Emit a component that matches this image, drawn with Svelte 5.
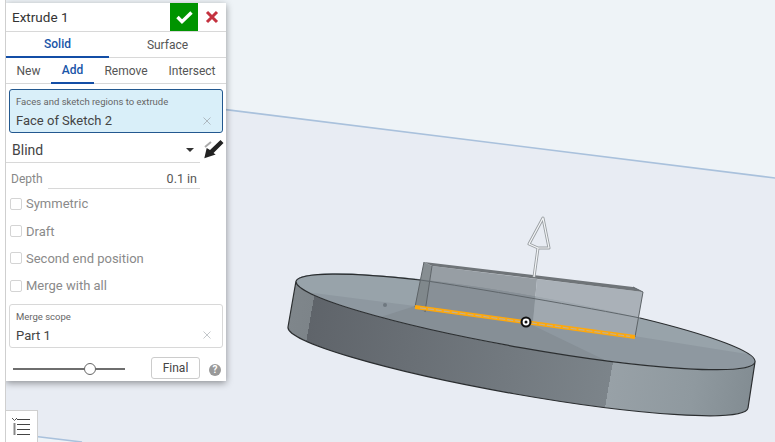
<script lang="ts">
	const modes = ['New', 'Add', 'Remove', 'Intersect'];
	const options = ['Symmetric', 'Draft', 'Second end position', 'Merge with all'];
</script>

<div class="app">
	<div class="rail"></div>
	<div class="viewport">
		<svg class="scene" viewBox="0 0 770 442" width="770" height="442">
			<defs>
				<linearGradient id="side" gradientUnits="userSpaceOnUse" x1="296" y1="281" x2="755" y2="361">
					<stop offset="0" stop-color="#7f868b" />
					<stop offset="0.044" stop-color="#7d8489" />
					<stop offset="0.044" stop-color="#5f646a" />
					<stop offset="0.7" stop-color="#7c848a" />
					<stop offset="0.7" stop-color="#98a1a7" />
					<stop offset="0.88" stop-color="#8f999f" />
					<stop offset="1" stop-color="#838d93" />
				</linearGradient>
				<clipPath id="disk-top">
					<ellipse cx="525.5" cy="321.5" rx="233" ry="26.5" transform="rotate(10 525.5 321.5)" />
				</clipPath>
			</defs>
			<g transform="translate(-5 0)">
				<rect x="0" y="0" width="780" height="442" fill="#eef3f7" />
				<path d="M0 80.5 L780 178.6 L780 442 L80 442 L0 431 Z" fill="#e8ecf3" />
				<path d="M100 94 L780 178.6" stroke="#a9c1dc" stroke-width="1.6" fill="none" />
				<path d="M30 435.8 L82 442" stroke="#a9c1dc" stroke-width="1.6" fill="none" />

				<!-- disk side -->
				<path d="M296 281 A233 26.5 10 0 0 755 362 L748 408 A233 26.5 10 0 1 288 327 Z" fill="url(#side)" />

				<!-- disk top -->
				<g clip-path="url(#disk-top)">
					<rect x="280" y="260" width="490" height="120" fill="#8e98a0" />
					<path d="M290 290 L415 306 L640 337 L760 356 L760 260 L290 260 Z" fill="#98a3aa" />
					<path d="M415 306 L526 322 L613 364 L340 330 Z" fill="#868f96" />
				</g>
				<circle cx="385" cy="305" r="2" fill="#6e787f" />

				<!-- block -->
				<path d="M424 262 L432 266 L425 312 L415 307 Z" fill="#7e858a" opacity="0.92" />
				<path d="M432 266 L537 279 L533 322 L425 312 Z" fill="#858c92" opacity="0.82" />
				<path d="M537 279 L643 292 L635 337 L533 322 Z" fill="#a0a9af" opacity="0.88" />
				<path d="M424 262 L633 287 L643 292 L432 266 Z" fill="#6f7478" />
				<path d="M424 262 L415 307 M432 266 L425 312" stroke="#5d6367" stroke-width="1" fill="none" />
				<path d="M633 287 L643 292 L635 337" stroke="#5d6367" stroke-width="1" fill="none" />
				<path d="M420 280 C470 287 590 308 640 318" stroke="#5f666b" stroke-width="1" fill="none" />

				<!-- disk outline -->
				<path d="M296 281 A233 26.5 10 0 1 420 280" stroke="#2b2e30" stroke-width="1.2" fill="none" />
				<path d="M640 318 A233 26.5 10 0 1 755 362 A233 26.5 10 0 1 296 281 L288 327 A233 26.5 10 0 0 748 408 L755 362" stroke="#2b2e30" stroke-width="1.2" fill="none" />

				<!-- selected edge -->
				<path d="M415 307 L635 337" stroke="#ffa80a" stroke-width="4" fill="none" />
				<path d="M420 307.8 L630 336.4" stroke="#bfb093" stroke-width="1.2" stroke-dasharray="6 2" fill="none" />

				<circle cx="526" cy="322" r="5.5" fill="#111" />
				<circle cx="526" cy="322" r="3.4" fill="#fff" />
				<circle cx="526" cy="322" r="1.5" fill="#111" />

				<!-- direction arrow -->
				<path d="M534 277 L538 248 L529 244 L543 218 L549 248 L538 248" stroke="#9a9fa3" stroke-width="3" stroke-linejoin="round" fill="none" />
				<path d="M534 277 L538 248 L529 244 L543 218 L549 248 L538 248" stroke="#f4f6f8" stroke-width="1.2" stroke-linejoin="round" fill="none" />
			</g>
		</svg>

		<div class="panel">
			<header class="title-bar">
				<span class="title">Extrude 1</span>
				<button class="ok" aria-label="Accept">
					<svg viewBox="0 0 28 28" width="28" height="28">
						<path d="M7.5 14 L12 18.7 L21.5 9.5" stroke="#fff" stroke-width="3.4" fill="none" />
					</svg>
				</button>
				<button class="cancel" aria-label="Cancel">
					<svg viewBox="0 0 14 14" width="14" height="14">
						<path d="M2 2 L12 12 M12 2 L2 12" stroke="#c4323f" stroke-width="3" fill="none" />
					</svg>
				</button>
			</header>

			<div class="tabs">
				<div class="tab active solid">Solid</div>
				<div class="tab surface">Surface</div>
			</div>

			<div class="tabs modes">
				{#each modes as mode}
					<div class="tab {mode.toLowerCase()}" class:active={mode === 'Add'}>{mode}</div>
				{/each}
			</div>

			<div class="field selected">
				<span class="field-label">Faces and sketch regions to extrude</span>
				<div class="field-value">
					<span>Face of Sketch 2</span>
					<svg class="clear" viewBox="0 0 8 8" width="8" height="8">
						<path d="M0.5 0.5 L7.5 7.5 M7.5 0.5 L0.5 7.5" stroke="#aeb9c0" stroke-width="1" fill="none" />
					</svg>
				</div>
			</div>

			<div class="type-row">
				<div class="select">
					<span>Blind</span>
					<span class="caret"></span>
				</div>
				<svg class="flip" viewBox="0 0 22 22" width="22" height="22">
					<path d="M2 10 L8 5" stroke="#aaa" stroke-width="2" fill="none" />
					<path d="M1.3 21.3 L3.7 11 L7 13 L17.5 3 L20.5 6 L10.5 16 L12.7 17.5 Z" fill="#222" />
				</svg>
			</div>

			<div class="depth-row">
				<span class="depth-label">Depth</span>
				<div class="depth-input">0.1 in</div>
			</div>

			<div class="options">
				{#each options as option}
					<label class="option">
						<span class="box"></span>
						<span>{option}</span>
					</label>
				{/each}
			</div>

			<div class="field">
				<span class="field-label">Merge scope</span>
				<div class="field-value">
					<span>Part 1</span>
					<svg class="clear" viewBox="0 0 8 8" width="8" height="8">
						<path d="M0.5 0.5 L7.5 7.5 M7.5 0.5 L0.5 7.5" stroke="#c4c8cb" stroke-width="1" fill="none" />
					</svg>
				</div>
			</div>

			<div class="footer">
				<div class="slider">
					<span class="thumb"></span>
				</div>
				<button class="final">Final</button>
				<span class="help">?</span>
			</div>
		</div>

		<div class="list-btn">
			<svg viewBox="0 0 32 32" width="32" height="32">
				<path d="M7 8 L9.5 10.5 L12 8" stroke="#555" stroke-width="1" fill="none" />
				<path d="M9.5 13 L9.5 25" stroke="#888" stroke-width="2" fill="none" />
				<path d="M12 9.5 H25 M12 14.5 H25 M12 19.5 H25 M12 24.5 H25" stroke="#444" stroke-width="1" fill="none" />
			</svg>
		</div>
	</div>
</div>

<style>
	:global(body) {
		margin: 0;
		background: #fff;
	}

	.app {
		display: flex;
		width: 775px;
		height: 442px;
		overflow: hidden;
		font-family: Roboto, "Liberation Sans", sans-serif;
		color: #444;
	}

	.rail {
		flex: none;
		background: #fff;
		border-right: 1px solid #cfcfcf;
		box-sizing: border-box;
		width: 6px;
	}

	.viewport {
		position: relative;
		flex: 1;
		overflow: hidden;
	}

	.scene {
		position: absolute;
		left: -1px;
		top: 0;
		display: block;
	}

	.panel {
		position: absolute;
		left: 0;
		top: 3px;
		width: 220px;
		height: 378px;
		background: #fff;
		box-shadow: 0 2px 7px rgba(0, 0, 0, 0.4);
		display: flex;
		flex-direction: column;
	}

	.title-bar {
		display: flex;
		align-items: center;
		height: 28px;
		flex: none;
		border-bottom: 1px solid #d8d8d8;
	}

	.title {
		flex: 1;
		padding-left: 6px;
		font-size: 13.5px;
		color: #333;
	}

	button {
		font-family: inherit;
		padding: 0;
		border: none;
		background: none;
	}

	.ok {
		width: 28px;
		height: 28px;
		background: #009400;
		display: flex;
	}

	.ok svg,
	.cancel svg {
		display: block;
	}

	.cancel {
		width: 28px;
		height: 28px;
		display: flex;
		align-items: center;
		justify-content: center;
	}

	.tabs {
		display: flex;
		height: 26px;
		flex: none;
		border-bottom: 1px solid #d8d8d8;
		box-sizing: border-box;
		font-size: 12px;
	}

	.tab {
		display: flex;
		align-items: center;
		justify-content: center;
		box-sizing: border-box;
		margin-bottom: -1px;
		color: #555;
	}

	.tab.active {
		color: #1a56a8;
		font-weight: 500;
		border-bottom: 2px solid #134ea6;
	}

	.solid { width: 103px; }
	.surface { width: 117px; }
	.new { width: 45px; }
	.add { width: 43px; }
	.remove { width: 64px; }
	.intersect { width: 68px; }

	.field {
		margin: 5px 3px 0;
		height: 44px;
		flex: none;
		box-sizing: border-box;
		border: 1px solid #d8d8d8;
		border-radius: 3px;
		padding: 5px 6px 0;
		display: flex;
		flex-direction: column;
	}

	.field.selected {
		background: #d9eff9;
		border-color: #23588f;
	}

	.field-label {
		font-size: 9.5px;
		line-height: 13px;
		color: #666;
	}

	.field-value {
		display: flex;
		align-items: center;
		justify-content: space-between;
		margin-top: 3px;
		padding-right: 5px;
		font-size: 13px;
		line-height: 19px;
		color: #444;
	}

	.type-row {
		display: flex;
		align-items: center;
		height: 30px;
		flex: none;
	}

	.select {
		flex: none;
		width: 194px;
		height: 30px;
		box-sizing: border-box;
		border-bottom: 1px solid #d8d8d8;
		padding: 5px 6px 0;
		display: flex;
		align-items: center;
		justify-content: space-between;
		font-size: 14px;
		color: #444;
	}

	.caret {
		width: 0;
		height: 0;
		border-left: 4px solid transparent;
		border-right: 4px solid transparent;
		border-top: 4px solid #333;
	}

	.flip {
		margin-left: 3px;
		flex: none;
	}

	.depth-row {
		display: flex;
		align-items: flex-start;
		height: 26px;
		flex: none;
		font-size: 12px;
	}

	.depth-label {
		width: 42px;
		padding: 8px 0 0 5px;
		box-sizing: border-box;
		line-height: 16px;
		color: #888;
	}

	.depth-input {
		width: 152px;
		height: 26px;
		box-sizing: border-box;
		border-bottom: 1px solid #d8d8d8;
		padding: 8px 3px 0 0;
		line-height: 16px;
		text-align: right;
		font-size: 12.5px;
		color: #555;
	}

	.options {
		display: flex;
		flex-direction: column;
		padding-top: 1px;
	}

	.option {
		display: flex;
		align-items: center;
		gap: 4px;
		height: 27.4px;
		padding-left: 4px;
		font-size: 13px;
		color: #8a8a8a;
	}

	.box {
		width: 12px;
		height: 12px;
		box-sizing: border-box;
		border: 1px solid #d4d4d4;
		border-radius: 2px;
	}

	.options + .field {
		margin-top: 4px;
	}

	.footer {
		position: relative;
		display: flex;
		align-items: center;
		height: 22px;
		margin-top: 9px;
		padding-left: 7px;
	}

	.slider {
		position: relative;
		width: 112px;
		height: 2px;
		background: #6e6e6e;
		margin-top: 2px;
	}

	.thumb {
		position: absolute;
		left: 71px;
		top: -5px;
		width: 12px;
		height: 12px;
		box-sizing: border-box;
		border: 1px solid #666;
		border-radius: 50%;
		background: #fff;
	}

	.final {
		margin-left: 26px;
		width: 49px;
		height: 22px;
		box-sizing: border-box;
		border: 1px solid #ccc;
		border-radius: 3px;
		background: #fff;
		font-size: 12px;
		color: #444;
	}

	.help {
		margin: 5px 0 0 9px;
		width: 12px;
		height: 12px;
		line-height: 12px;
		border-radius: 50%;
		background: #999;
		color: #fff;
		font-size: 10px;
		font-weight: 700;
		text-align: center;
	}

	.list-btn {
		position: absolute;
		left: -1px;
		top: 410px;
		width: 33px;
		height: 32px;
		box-sizing: border-box;
		background: #fff;
		border-top: 1px solid #cfcfcf;
		border-right: 1px solid #cfcfcf;
	}

	.list-btn svg {
		display: block;
		margin-top: -1px;
	}
</style>
